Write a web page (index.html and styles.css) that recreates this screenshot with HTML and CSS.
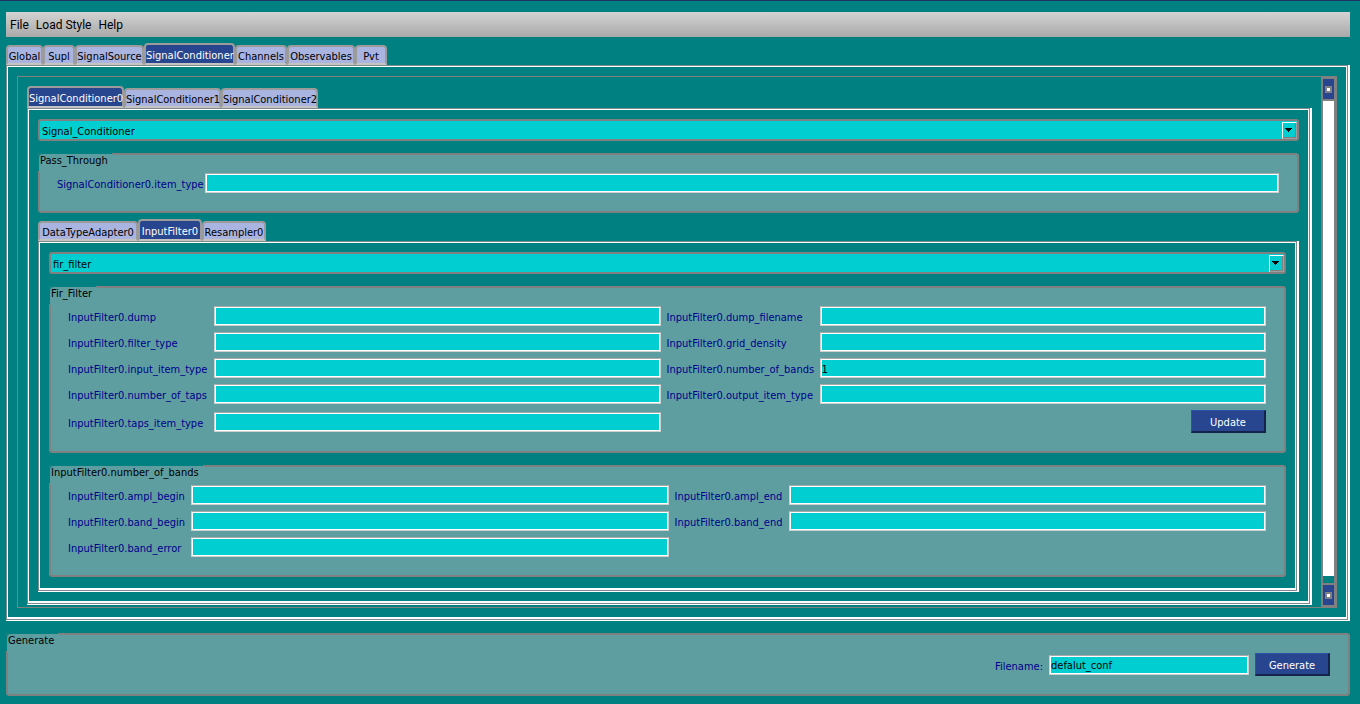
FILE: index.html
```
<!DOCTYPE html>
<html lang="en">
<head>
<meta charset="utf-8">
<title>Receiver configuration</title>
<link rel="stylesheet" href="styles.css">
</head>
<body>
<nav class="menubar">
  <button type="button">File</button>
  <button type="button">Load Style</button>
  <button type="button">Help</button>
</nav>

<main>
  <div class="tabs tabs-main" role="tablist">
    <button type="button" role="tab">Global</button>
    <button type="button" role="tab">Supl</button>
    <button type="button" role="tab">SignalSource</button>
    <button type="button" role="tab" aria-selected="true">SignalConditioner</button>
    <button type="button" role="tab">Channels</button>
    <button type="button" role="tab">Observables</button>
    <button type="button" role="tab">Pvt</button>
  </div>
  <div class="pane pane-outer">
    <div class="scroll-area">
      <div class="scroll-content">
        <div class="tabs tabs-conditioner" role="tablist">
          <button type="button" role="tab" aria-selected="true">SignalConditioner0</button>
          <button type="button" role="tab">SignalConditioner1</button>
          <button type="button" role="tab">SignalConditioner2</button>
        </div>
        <div class="pane pane-middle">
          <div class="combo">
            <select aria-label="Signal conditioner implementation"><option>Signal_Conditioner</option></select>
            <span class="combo-arrow"><svg width="7" height="4" viewBox="0 0 7 4" shape-rendering="crispEdges"><path d="M0 0h7v1h-1v1h-1v1h-1v1h-1v-1h-1v-1h-1v-1h-1z"/></svg></span>
          </div>
          <fieldset class="group">
            <legend>Pass_Through</legend>
            <div class="form form-single">
              <label for="sc-item">SignalConditioner0.item_type</label><input type="text" id="sc-item">
            </div>
          </fieldset>

          <div class="tabs tabs-inner" role="tablist">
            <button type="button" role="tab">DataTypeAdapter0</button>
            <button type="button" role="tab" aria-selected="true">InputFilter0</button>
            <button type="button" role="tab">Resampler0</button>
          </div>
          <div class="pane pane-inner">
            <div class="combo">
              <select aria-label="Input filter implementation"><option>fir_filter</option></select>
              <span class="combo-arrow"><svg width="7" height="4" viewBox="0 0 7 4" shape-rendering="crispEdges"><path d="M0 0h7v1h-1v1h-1v1h-1v1h-1v-1h-1v-1h-1v-1h-1z"/></svg></span>
            </div>
            <fieldset class="group">
              <legend>Fir_Filter</legend>
              <div class="form form-filter">
                <label for="f-dump">InputFilter0.dump</label><input type="text" id="f-dump">
                <label for="f-dumpfile">InputFilter0.dump_filename</label><input type="text" id="f-dumpfile">
                <label for="f-type">InputFilter0.filter_type</label><input type="text" id="f-type">
                <label for="f-grid">InputFilter0.grid_density</label><input type="text" id="f-grid">
                <label for="f-input">InputFilter0.input_item_type</label><input type="text" id="f-input">
                <label for="f-bands">InputFilter0.number_of_bands</label><input type="text" id="f-bands" value="1">
                <label for="f-taps">InputFilter0.number_of_taps</label><input type="text" id="f-taps">
                <label for="f-output">InputFilter0.output_item_type</label><input type="text" id="f-output">
                <label for="f-tapstype">InputFilter0.taps_item_type</label><input type="text" id="f-tapstype">
                <button type="button" class="push">Update</button>
              </div>
            </fieldset>
            <fieldset class="group">
              <legend>InputFilter0.number_of_bands</legend>
              <div class="form form-bands">
                <label for="b-ab">InputFilter0.ampl_begin</label><input type="text" id="b-ab">
                <label for="b-ae">InputFilter0.ampl_end</label><input type="text" id="b-ae">
                <label for="b-bb">InputFilter0.band_begin</label><input type="text" id="b-bb">
                <label for="b-be">InputFilter0.band_end</label><input type="text" id="b-be">
                <label for="b-err">InputFilter0.band_error</label><input type="text" id="b-err">
              </div>
            </fieldset>
          </div>
        </div>
      </div>
      <div class="scrollbar">
        <button type="button" aria-label="Scroll up"></button>
        <div class="scroll-thumb"></div>
        <button type="button" aria-label="Scroll down"></button>
      </div>
    </div>
  </div>

  <fieldset class="group group-generate">
    <legend>Generate</legend>
    <div class="generate-row">
      <label for="filename">Filename:</label><input type="text" id="filename" value="defalut_conf">
      <button type="button" class="push">Generate</button>
    </div>
  </fieldset>
</main>
</body>
</html>
```
FILE: styles.css
```
*, *::before { box-sizing: border-box; }

body {
  margin: 0;
  padding: 11px 10px 8px 6px;
  border-top: 1px solid #1b3562;
  background: #008080;
  color: #000;
  font: 11px/14px "DejaVu Sans Condensed", Tahoma, sans-serif;
}

button, input, select { font: inherit; color: inherit; margin: 0; }

.menubar {
  display: flex;
  gap: 7px;
  height: 25px;
  padding: 0 4px;
  background: linear-gradient(#d3d3d3, #a9a9a9);
  font: 12px/16px Roboto, "Segoe UI", sans-serif;
}
.menubar button { padding: 1px 0 0; border: 0; background: none; }

.tabs {
  display: grid;
  justify-content: start;
  align-items: end;
  height: 22px;
}
main > .tabs { margin-top: 6px; }
.tabs-main { grid-template-columns: 37px 32px 69px 91px 52px 68px 32px; }
.tabs-conditioner { grid-template-columns: repeat(3, 97px); }
.tabs-inner {
  grid-template-columns: 100px 64px 64px;
  margin-top: 6px;
}
.tabs button {
  height: 20px;
  padding: 3px 0 0;
  border: 2px solid #9b9b9b;
  border-bottom-color: #c4c4c3;
  border-radius: 4px 4px 0 0;
  background: #aab4e0;
  line-height: 13px;
  white-space: nowrap;
}
.tabs button[aria-selected="true"] {
  height: 22px;
  background: #27468f;
  color: #fff;
}

.pane {
  box-shadow:
    inset -2px -1px #fff,
    inset 1px 1px #808890,
    inset -3px -2px #808890,
    inset 2px 2px #fff,
    inset -4px -4px #fff;
}
.pane-outer { padding: 11px 13px 13px 11px; }
.pane-middle { padding: 11px 13px 13px 11px; }
.pane-inner { padding: 11px 13px 15px 11px; }

.scroll-area { display: flex; }
.scroll-content {
  flex: 1;
  min-width: 0;
  padding: 9px 9px 2px 9px;
  border: 1px solid #808080;
  border-right: 0;
}
.scrollbar {
  display: flex;
  flex-direction: column;
  width: 16px;
  padding: 3px 3px 3px 2px;
  background: #808080;
}
.scrollbar button {
  display: grid;
  place-items: center;
  height: 20px;
  padding: 0;
  border: 0;
  background: #27468f;
}
.scrollbar button::before {
  content: "";
  width: 7px;
  height: 7px;
  border: 2px solid #808080;
  background: #fff;
}
.scroll-thumb {
  flex: 1;
  margin: 2px 0;
  border-bottom: 7px solid #008080;
  background: #fff;
}

.combo { position: relative; }
.combo select {
  display: block;
  appearance: none;
  width: 100%;
  height: 22px;
  padding: 3px 2px 0;
  border: 2px solid #808080;
  border-radius: 3px;
  background: #00ced1;
}
.combo-arrow {
  position: absolute;
  top: 3px;
  right: 2px;
  display: grid;
  place-items: start;
  width: 15px;
  height: 17px;
  padding: 5px 0 0 2px;
  border: 1px solid #fff;
  border-right-color: #a0a0a0;
  border-bottom-color: #a0a0a0;
  box-shadow: inset -1px -1px #808080;
  pointer-events: none;
}

.group {
  min-width: 0;
  margin: 12px 0 0;
  padding: 18px 18px 18px 17px;
  border: 2px solid #808080;
  border-radius: 4px;
  background: #5f9ea0;
}
.group legend {
  float: left;
  height: 18px;
  margin: -19px 0 0 -18px;
  padding: 0 5px 0 1px;
  border-radius: 4px 0 0 0;
  background: #5f9ea0;
  box-shadow: -1px -1px #008080;
}
.group label {
  padding-top: 4px;
  color: #00008b;
  white-space: nowrap;
}

.form {
  clear: both;
  display: grid;
  align-items: center;
  gap: 6px;
}
.form-single { grid-template-columns: 142px 1fr; }
.form-filter { grid-template-columns: 140px 1fr 147px 1fr; }
.form-bands { grid-template-columns: 117px 1fr 108px 1fr; }

.group input {
  width: 100%;
  min-width: 0;
  height: 20px;
  padding: 2px 1px 0;
  border: 1px solid #d0d0d0;
  border-top-color: #a9a9a9;
  background: #00ced1;
  box-shadow: inset 0 0 0 1px #fff;
}
.push {
  width: 75px;
  height: 23px;
  padding: 3px 0 0;
  border: 1px solid #2d52a8;
  border-right: 2px solid #14234a;
  border-bottom: 2px solid #14234a;
  background: #27468f;
  color: #fff;
}
.form-filter .push { grid-column: 4; justify-self: end; }

.generate-row {
  clear: both;
  display: flex;
  justify-content: flex-end;
  align-items: center;
  gap: 6px;
}
.group .generate-row input { width: 200px; }
```
